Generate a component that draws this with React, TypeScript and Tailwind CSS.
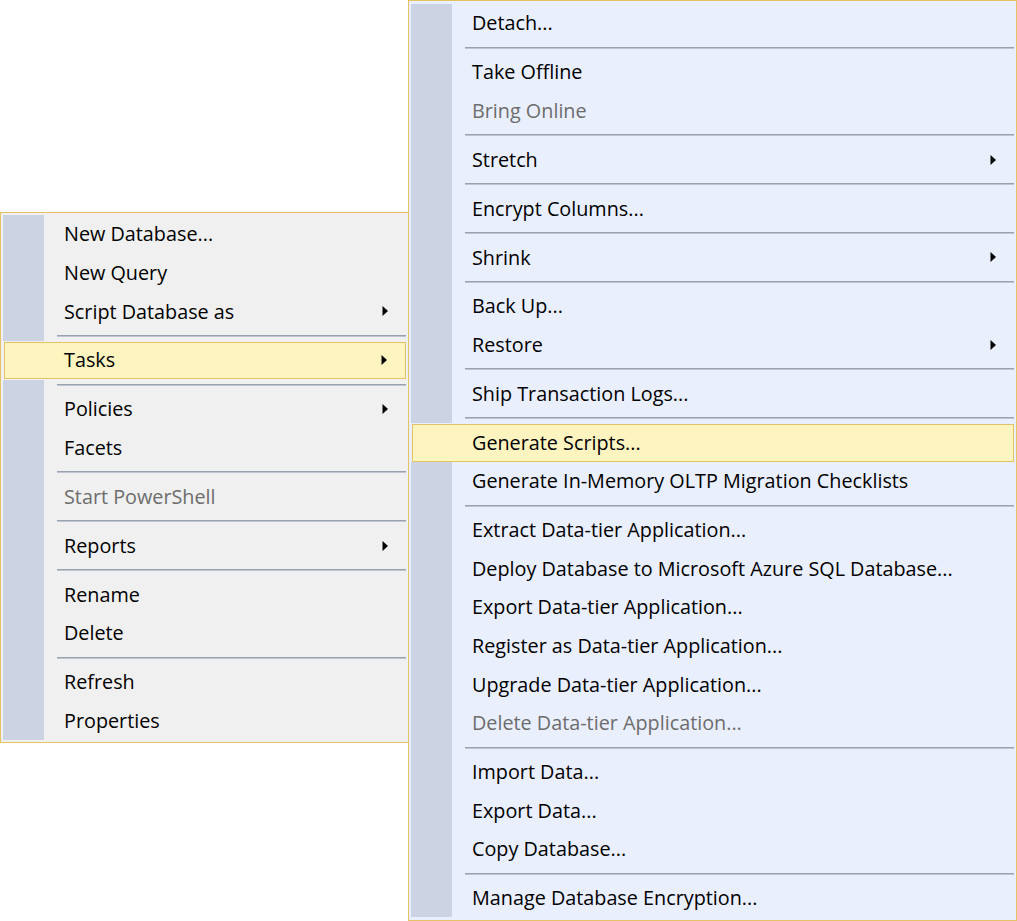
import React from "react";

type Item =
  | { type: "sep" }
  | { type: "item"; label: string; disabled?: boolean; sub?: boolean; hl?: boolean };

const leftItems: Item[] = [
  { type: "item", label: "New Database..." },
  { type: "item", label: "New Query" },
  { type: "item", label: "Script Database as", sub: true },
  { type: "sep" },
  { type: "item", label: "Tasks", sub: true, hl: true },
  { type: "sep" },
  { type: "item", label: "Policies", sub: true },
  { type: "item", label: "Facets" },
  { type: "sep" },
  { type: "item", label: "Start PowerShell", disabled: true },
  { type: "sep" },
  { type: "item", label: "Reports", sub: true },
  { type: "sep" },
  { type: "item", label: "Rename" },
  { type: "item", label: "Delete" },
  { type: "sep" },
  { type: "item", label: "Refresh" },
  { type: "item", label: "Properties" },
];

const rightItems: Item[] = [
  { type: "item", label: "Detach..." },
  { type: "sep" },
  { type: "item", label: "Take Offline" },
  { type: "item", label: "Bring Online", disabled: true },
  { type: "sep" },
  { type: "item", label: "Stretch", sub: true },
  { type: "sep" },
  { type: "item", label: "Encrypt Columns..." },
  { type: "sep" },
  { type: "item", label: "Shrink", sub: true },
  { type: "sep" },
  { type: "item", label: "Back Up..." },
  { type: "item", label: "Restore", sub: true },
  { type: "sep" },
  { type: "item", label: "Ship Transaction Logs..." },
  { type: "sep" },
  { type: "item", label: "Generate Scripts...", hl: true },
  { type: "item", label: "Generate In-Memory OLTP Migration Checklists" },
  { type: "sep" },
  { type: "item", label: "Extract Data-tier Application..." },
  { type: "item", label: "Deploy Database to Microsoft Azure SQL Database..." },
  { type: "item", label: "Export Data-tier Application..." },
  { type: "item", label: "Register as Data-tier Application..." },
  { type: "item", label: "Upgrade Data-tier Application..." },
  { type: "item", label: "Delete Data-tier Application...", disabled: true },
  { type: "sep" },
  { type: "item", label: "Import Data..." },
  { type: "item", label: "Export Data..." },
  { type: "item", label: "Copy Database..." },
  { type: "sep" },
  { type: "item", label: "Manage Database Encryption..." },
];

function Arrow() {
  return (
    <svg width="7" height="11" viewBox="0 0 7 11" className="absolute right-[17px] top-1/2 -translate-y-1/2">
      <polygon points="0.5,0.5 6,5.5 0.5,10.5" fill="#000" />
    </svg>
  );
}

function Menu({ items }: { items: Item[] }) {
  return (
    <div className="flex flex-col">
      {items.map((it, i) => {
        if (it.type === "sep") {
          return (
            <div key={i} className="flex h-[10.3px]">
              <div className="w-[41px] bg-[#ccd3e3]" />
              <div className="flex flex-1 items-center pl-[13px]">
                <div className="h-[2px] w-full border-t border-[#9aa2b0] border-b border-b-[#bfc5d0]" />
              </div>
            </div>
          );
        }
        if (it.hl) {
          return (
            <div key={i} className="relative flex h-[38.6px] items-center py-[0.5px]">
              <div className="relative ml-[1px] flex h-full flex-1 items-center border border-[#e5c365] bg-[#fdf4c0]">
                <span className="pl-[59px] text-black">{it.label}</span>
                {it.sub && <Arrow />}
              </div>
            </div>
          );
        }
        return (
          <div key={i} className="relative flex h-[38.6px]">
            <div className="w-[41px] bg-[#ccd3e3]" />
            <div className="flex flex-1 items-center pl-[20px]">
              <span className={it.disabled ? "text-[#6d6d6d]" : "text-black"}>{it.label}</span>
            </div>
            {it.sub && <Arrow />}
          </div>
        );
      })}
    </div>
  );
}

export default function App() {
  return (
    <div
      className="relative h-[921px] w-[1017px] overflow-hidden bg-white text-[19.8px] leading-none"
      style={{ fontFamily: '"Open Sans", "Noto Sans", sans-serif' }}
    >
      <div className="absolute left-0 top-[212px] w-[409px] border border-[#e5c365] bg-[#f0f0f0] p-[2px]">
        <Menu items={leftItems} />
      </div>
      <div className="absolute left-[408px] top-0 h-[921px] w-[609px] border border-[#e5c365] bg-[#eaeffd] p-[2px] pt-[3px]">
        <Menu items={rightItems} />
      </div>
    </div>
  );
}
